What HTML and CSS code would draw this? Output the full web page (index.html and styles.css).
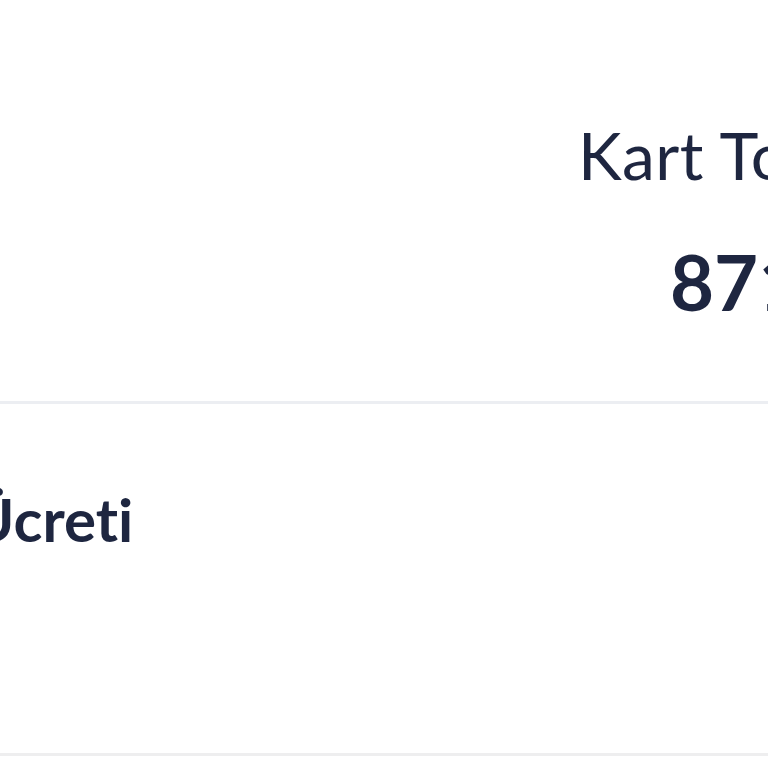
FILE: index.html
```html
<!DOCTYPE html>
<html lang="tr">
<head>
<meta charset="utf-8">
<link rel="stylesheet" href="styles.css">
</head>
<body>
<div class="page">
  <section class="summary">
    <div class="stat">
      <div class="stat-label">Kart Toplamı</div>
      <div class="stat-value">871,00 ₺</div>
    </div>
  </section>
  <section class="fee">
    <div class="fee-title">Ücreti</div>
  </section>
</div>
</body>
</html>
```
FILE: styles.css
```css
html, body {
  margin: 0;
  padding: 0;
  background: #ffffff;
  overflow: hidden;
}
.page {
  width: 768px;
  height: 768px;
  display: flex;
  flex-direction: column;
  font-family: "Lato", "Noto Sans", sans-serif;
  font-variant-ligatures: none;
  color: #1e2640;
  overflow: hidden;
}
.summary {
  height: 404px;
  box-sizing: border-box;
  border-bottom: 3px solid #eceef2;
  padding-left: 578px;
  padding-top: 115px;
  white-space: nowrap;
  flex-shrink: 0;
}
.stat {
  display: flex;
  flex-direction: column;
}
.stat-label {
  font-size: 66px;
  font-weight: 400;
  line-height: 80px;
  letter-spacing: 0.5px;
}
.stat-value {
  font-size: 76px;
  font-weight: 700;
  line-height: 90px;
  margin-top: 42px;
  padding-left: 92px;
}
.fee {
  height: 352px;
  box-sizing: border-box;
  border-bottom: 3px solid #eeeeef;
  padding-top: 79px;
  flex-shrink: 0;
  white-space: nowrap;
}
.fee-title {
  font-size: 60px;
  font-weight: 700;
  line-height: 72px;
  margin-left: -30px;
}
```
